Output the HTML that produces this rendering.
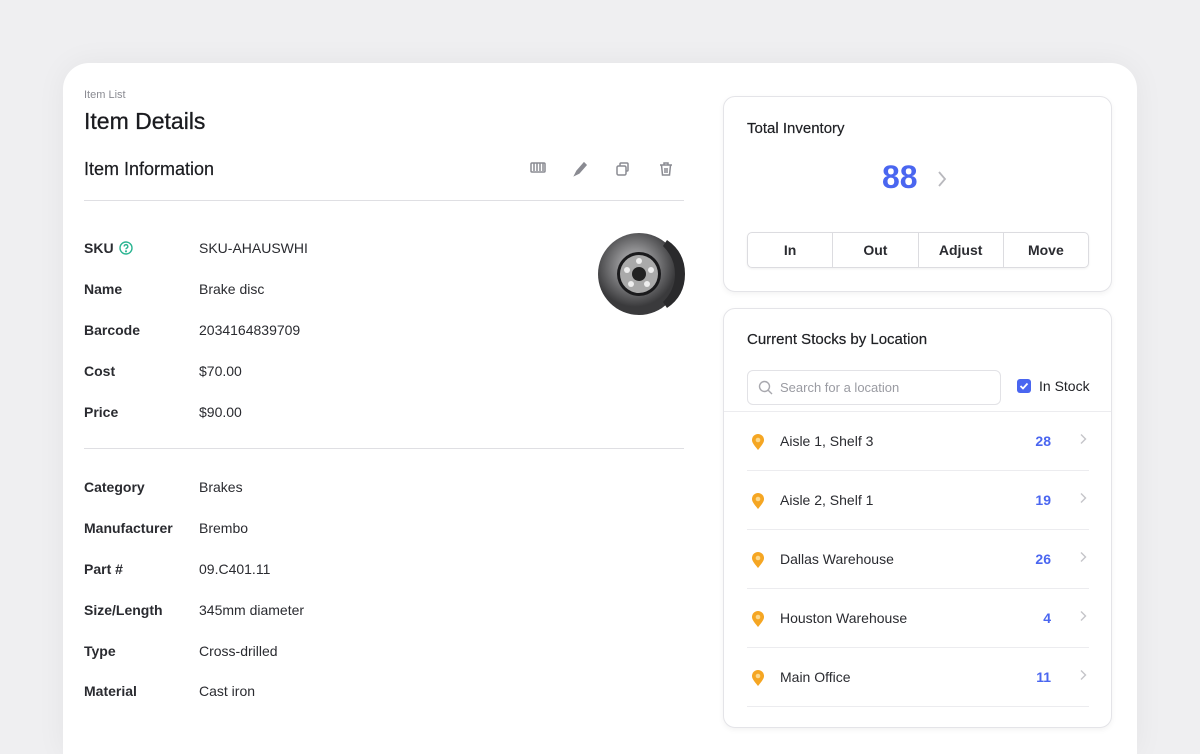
<!DOCTYPE html>
<html><head><style>
*{margin:0;padding:0;box-sizing:border-box}
html,body{width:1200px;height:754px;overflow:hidden}
body{background:#efeff1;font-family:"Liberation Sans",sans-serif;color:#1f2024;position:relative}
.main{position:absolute;left:63px;top:63px;width:1074px;height:691px;background:#fff;border-radius:26px 26px 0 0;box-shadow:0 0 30px rgba(0,0,0,.05)}
.abs{position:absolute}
.lbl{position:absolute;left:84px;font-size:14px;font-weight:bold;color:#2a2b30}
.val{position:absolute;left:199px;font-size:14px;color:#2a2b30}
.card{position:absolute;left:723px;width:389px;background:#fff;border:1px solid #e4e4e8;border-radius:12px;box-shadow:0 2px 6px rgba(0,0,0,.05)}
.btns{position:absolute;left:23px;top:135px;width:342px;height:36px;border:1px solid #dcdce0;border-radius:5px;display:flex;box-shadow:0 1px 2px rgba(0,0,0,.06)}
.btns div{flex:1;text-align:center;line-height:34px;font-size:14px;font-weight:bold;border-left:1px solid #dcdce0;color:#2a2b30}
.btns div:first-child{border-left:none}
.row{position:absolute;left:23px;width:342px;height:59px;border-bottom:1px solid #ececef}
.row .n{position:absolute;left:33px;top:21px;font-size:14px;color:#2a2b30}
.row .q{position:absolute;right:38px;top:21px;font-size:14px;color:#4a66f0;font-weight:bold}
.row .c{position:absolute;right:2px;top:21px}
.pin{position:absolute;left:4px;top:21px}
</style></head><body>
<div class="main"></div>
<div class="abs" style="left:84px;top:89px;font-size:11px;color:#8a8b92">Item List</div>
<div class="abs" style="left:84px;top:108px;font-size:23px;color:#1a1b1f;-webkit-text-stroke:.3px #1a1b1f">Item Details</div>
<div class="abs" style="left:84px;top:159px;font-size:18px;color:#1a1b1f;-webkit-text-stroke:.2px #1a1b1f">Item Information</div>
<svg class="abs" style="left:529px;top:160px" width="150" height="18" viewBox="0 0 150 18" fill="none" stroke="#8a8b92" stroke-width="1.5">
<rect x="2" y="3" width="14" height="9" rx="1"/><path d="M5 3v8M8 3v8M11 3v8M14 3v8"/>
<path d="M46 15l2-4 7-8 2 2-7 8z" fill="#8a8b92"/>
<rect x="88" y="6" width="9" height="9" rx="1.5"/><path d="M91 6V4a1 1 0 0 1 1-1h6a1 1 0 0 1 1 1v6a1 1 0 0 1-1 1h-1"/>
<path d="M131 5h12M135 5V3h4v2M132.5 5l1 10h7l1-10M136 8v5M138 8v5"/>
</svg>
<div class="abs" style="left:84px;top:200px;width:600px;height:1px;background:#dfdfe3"></div>
<div class="abs" style="left:84px;top:448px;width:600px;height:1px;background:#dfdfe3"></div>
<svg class="abs" style="left:597px;top:232px" width="88" height="84" viewBox="0 0 88 84">
<defs><radialGradient id="g" cx="45%" cy="40%"><stop offset="0" stop-color="#c8c8ca"/><stop offset="1" stop-color="#3a3a3c"/></radialGradient></defs>
<circle cx="42" cy="42" r="41" fill="url(#g)"/>
<circle cx="42" cy="42" r="22" fill="#1a1a1c"/><circle cx="42" cy="42" r="19" fill="#aaa"/>
<circle cx="42" cy="42" r="7" fill="#222"/>
<circle cx="42" cy="29" r="3" fill="#eee"/><circle cx="54" cy="38" r="3" fill="#eee"/><circle cx="50" cy="52" r="3" fill="#eee"/><circle cx="34" cy="52" r="3" fill="#eee"/><circle cx="30" cy="38" r="3" fill="#eee"/>
<path d="M70 8 Q88 20 88 42 Q88 64 70 76 L66 70 Q78 58 78 42 Q78 26 66 14z" fill="#2a2a2c"/>
</svg>
<div class="lbl" style="top:240px">SKU</div>
<svg class="abs" style="left:119px;top:241px" width="14" height="14" viewBox="0 0 14 14" fill="none" stroke="#2bb592" stroke-width="1.4"><circle cx="7" cy="7" r="6"/><path d="M5.2 5.5a1.8 1.8 0 1 1 2.5 1.6c-.5.3-.7.6-.7 1.2"/><circle cx="7" cy="10.3" r=".4" fill="#2bb592"/></svg>
<div class="val" style="top:240px">SKU-AHAUSWHI</div>
<div class="lbl" style="top:281px">Name</div><div class="val" style="top:281px">Brake disc</div>
<div class="lbl" style="top:322px">Barcode</div><div class="val" style="top:322px">2034164839709</div>
<div class="lbl" style="top:363px">Cost</div><div class="val" style="top:363px">$70.00</div>
<div class="lbl" style="top:404px">Price</div><div class="val" style="top:404px">$90.00</div>
<div class="lbl" style="top:479px">Category</div><div class="val" style="top:479px">Brakes</div>
<div class="lbl" style="top:520px">Manufacturer</div><div class="val" style="top:520px">Brembo</div>
<div class="lbl" style="top:561px">Part #</div><div class="val" style="top:561px">09.C401.11</div>
<div class="lbl" style="top:602px">Size/Length</div><div class="val" style="top:602px">345mm diameter</div>
<div class="lbl" style="top:643px">Type</div><div class="val" style="top:643px">Cross-drilled</div>
<div class="lbl" style="top:683px">Material</div><div class="val" style="top:683px">Cast iron</div>

<div class="card" style="top:96px;height:196px">
<div class="abs" style="left:23px;top:23px;font-size:15px;-webkit-text-stroke:.2px #1f2024">Total Inventory</div>
<div class="abs" style="left:158px;top:62px;font-size:32px;font-weight:bold;color:#4a66f0">88</div>
<svg class="abs" style="left:212px;top:73px" width="12" height="18" viewBox="0 0 12 18" fill="none" stroke="#b8b8bd" stroke-width="1.8"><path d="M3 2l6 7-6 7"/></svg>
<div class="btns"><div>In</div><div>Out</div><div>Adjust</div><div>Move</div></div>
</div>
<div class="card" style="top:308px;height:420px">
<div class="abs" style="left:23px;top:22px;font-size:15px;-webkit-text-stroke:.2px #1f2024">Current Stocks by Location</div>
<div class="abs" style="left:23px;top:61px;width:254px;height:35px;border:1px solid #e2e2e6;border-radius:6px">
<svg class="abs" style="left:10px;top:9px" width="16" height="16" viewBox="0 0 16 16" fill="none" stroke="#a8a8ae" stroke-width="1.4"><circle cx="6.5" cy="6.5" r="5"/><path d="M10.2 10.2L14 14"/></svg>
<div class="abs" style="left:32px;top:9px;font-size:13px;color:#9a9ba2">Search for a location</div></div>
<div class="abs" style="left:293px;top:70px;width:14px;height:14px;border-radius:3px;background:#4a66f0"><svg width="14" height="14" viewBox="0 0 14 14" fill="none" stroke="#fff" stroke-width="1.8"><path d="M3.5 7l2.5 2.5 4.5-5"/></svg></div>
<div class="abs" style="left:315px;top:69px;font-size:14px">In Stock</div>
<div class="abs" style="left:0;top:102px;width:387px;height:1px;background:#ececef"></div>
<div class="row" style="top:103px"><svg class="pin" width="14" height="18" viewBox="0 0 14 18"><path d="M7 17C2 11 1 9 1 7a6 6 0 0 1 12 0c0 2-1 4-6 10z" fill="#f5a623"/><circle cx="7" cy="7" r="2.3" fill="#fcd98e"/></svg><div class="n">Aisle 1, Shelf 3</div><div class="q">28</div><svg class="c" width="8" height="12" viewBox="0 0 8 12" fill="none" stroke="#c4c4c8" stroke-width="1.4"><path d="M2 1.5l4.5 4.5L2 10.5"/></svg></div>
<div class="row" style="top:162px"><svg class="pin" width="14" height="18" viewBox="0 0 14 18"><path d="M7 17C2 11 1 9 1 7a6 6 0 0 1 12 0c0 2-1 4-6 10z" fill="#f5a623"/><circle cx="7" cy="7" r="2.3" fill="#fcd98e"/></svg><div class="n">Aisle 2, Shelf 1</div><div class="q">19</div><svg class="c" width="8" height="12" viewBox="0 0 8 12" fill="none" stroke="#c4c4c8" stroke-width="1.4"><path d="M2 1.5l4.5 4.5L2 10.5"/></svg></div>
<div class="row" style="top:221px"><svg class="pin" width="14" height="18" viewBox="0 0 14 18"><path d="M7 17C2 11 1 9 1 7a6 6 0 0 1 12 0c0 2-1 4-6 10z" fill="#f5a623"/><circle cx="7" cy="7" r="2.3" fill="#fcd98e"/></svg><div class="n">Dallas Warehouse</div><div class="q">26</div><svg class="c" width="8" height="12" viewBox="0 0 8 12" fill="none" stroke="#c4c4c8" stroke-width="1.4"><path d="M2 1.5l4.5 4.5L2 10.5"/></svg></div>
<div class="row" style="top:280px"><svg class="pin" width="14" height="18" viewBox="0 0 14 18"><path d="M7 17C2 11 1 9 1 7a6 6 0 0 1 12 0c0 2-1 4-6 10z" fill="#f5a623"/><circle cx="7" cy="7" r="2.3" fill="#fcd98e"/></svg><div class="n">Houston Warehouse</div><div class="q">4</div><svg class="c" width="8" height="12" viewBox="0 0 8 12" fill="none" stroke="#c4c4c8" stroke-width="1.4"><path d="M2 1.5l4.5 4.5L2 10.5"/></svg></div>
<div class="row" style="top:339px"><svg class="pin" width="14" height="18" viewBox="0 0 14 18"><path d="M7 17C2 11 1 9 1 7a6 6 0 0 1 12 0c0 2-1 4-6 10z" fill="#f5a623"/><circle cx="7" cy="7" r="2.3" fill="#fcd98e"/></svg><div class="n">Main Office</div><div class="q">11</div><svg class="c" width="8" height="12" viewBox="0 0 8 12" fill="none" stroke="#c4c4c8" stroke-width="1.4"><path d="M2 1.5l4.5 4.5L2 10.5"/></svg></div>
</div>
</body></html>
